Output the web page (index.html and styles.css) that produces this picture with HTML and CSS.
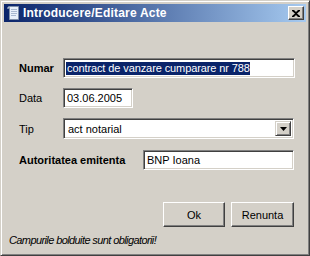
FILE: index.html
```html
<!DOCTYPE html>
<html lang="ro">
<head>
  <meta charset="UTF-8">
  <title>Introducere/Editare Acte</title>
  <link rel="stylesheet" href="styles.css">
</head>
<body>
  <div class="acte-window">
    <div class="acte-titlebar">
      <svg class="acte-title-icon" width="16" height="16" viewBox="0 0 16 16">
        <path d="M3.5 1.5h9v13h-9z" fill="#e8f0fa" stroke="#7f8fa8"/>
        <path d="M3.5 1.5c-1.5 0-2 1-2 2h2" fill="#c8d8ee" stroke="#7f8fa8"/>
        <path d="M5 4.5h6M5 6.5h6M5 8.5h6M5 10.5h5" stroke="#a8b8d0"/>
      </svg>
      <span class="acte-title-text">Introducere/Editare Acte</span>
      <span class="acte-close-btn">
        <svg width="8" height="7" viewBox="0 0 8 7">
          <path d="M0 0h2l2 2 2-2h2v1L5 3.5 8 6v1H6L4 5 2 7H0V6l3-2.5L0 1z" fill="#000"/>
        </svg>
      </span>
    </div>
    <div class="acte-body">
      <div class="acte-form">
        <div class="acte-row">
          <label class="acte-label acte-label-bold">Numar</label>
          <div class="acte-textbox acte-textbox-numar"><span class="acte-selected">contract de vanzare cumparare nr 788</span></div>
        </div>
        <div class="acte-row">
          <label class="acte-label">Data</label>
          <div class="acte-textbox acte-textbox-data">03.06.2005</div>
        </div>
        <div class="acte-row acte-row-tip">
          <label class="acte-label">Tip</label>
          <div class="acte-combo">
            <span class="acte-combo-text">act notarial</span>
            <span class="acte-combo-btn">
              <svg width="7" height="4" viewBox="0 0 7 4"><path d="M0 0h7L3.5 4z" fill="#000"/></svg>
            </span>
          </div>
        </div>
        <div class="acte-row acte-row-autoritate">
          <label class="acte-label acte-label-bold acte-label-wide">Autoritatea emitenta</label>
          <div class="acte-textbox acte-textbox-autoritate">BNP Ioana</div>
        </div>
      </div>
      <div class="acte-actions">
        <button class="acte-btn acte-btn-ok">Ok</button>
        <button class="acte-btn acte-btn-cancel">Renunta</button>
      </div>
      <div class="acte-note">Campurile bolduite sunt obligatorii!</div>
    </div>
  </div>
</body>
</html>
```

FILE: styles.css
```css
body {
  margin: 0;
  font-family: "Liberation Sans", Arial, sans-serif;
  font-size: 11px;
  color: #000;
  background: #d4d0c8;
}

.acte-window {
  width: 310px;
  height: 256px;
  box-sizing: border-box;
  border: 1px solid;
  border-color: #d4d0c8 #404040 #404040 #d4d0c8;
  box-shadow: inset 1px 1px #ffffff, inset -1px -1px #808080;
  padding: 3px;
  background-color: #d4d0c8;
  display: flex;
  flex-direction: column;
}

.acte-titlebar {
  height: 18px;
  display: flex;
  align-items: center;
  background: linear-gradient(to right, #0a246a, #a6caf0);
  padding: 0 2px 0 2px;
}

.acte-title-icon {
  flex: none;
  margin-right: 1px;
}

.acte-title-text {
  flex: 1;
  color: #ffffff;
  font-weight: bold;
  font-size: 12px;
  letter-spacing: 0.2px;
  white-space: nowrap;
}

.acte-close-btn {
  width: 16px;
  height: 14px;
  box-sizing: border-box;
  display: flex;
  align-items: center;
  justify-content: center;
  background-color: #d4d0c8;
  border: 1px solid;
  border-color: #ffffff #404040 #404040 #ffffff;
  box-shadow: inset -1px -1px #808080;
}

.acte-body {
  flex: 1;
  display: flex;
  flex-direction: column;
}

.acte-form {
  display: flex;
  flex-direction: column;
  gap: 10px;
  padding: 36px 0 0 15px;
}

.acte-row {
  display: flex;
  align-items: center;
  height: 20px;
}

.acte-row-tip {
  height: 21px;
}

.acte-row-autoritate {
  margin-top: 1px;
}

.acte-label {
  width: 44px;
  flex: none;
}

.acte-label-bold {
  font-weight: bold;
}

.acte-label-wide {
  width: 124px;
}

.acte-textbox {
  height: 20px;
  box-sizing: border-box;
  display: flex;
  align-items: center;
  padding-left: 3px;
  background-color: #ffffff;
  border: 1px solid;
  border-color: #808080 #ffffff #ffffff #808080;
  box-shadow: inset 1px 1px #404040, inset -1px -1px #d4d0c8;
  white-space: nowrap;
  overflow: hidden;
}

.acte-textbox-numar {
  width: 232px;
  padding-left: 2px;
}

.acte-textbox-data {
  width: 70px;
}

.acte-textbox-autoritate {
  width: 151px;
}

.acte-selected {
  background-color: #0a246a;
  color: #ffffff;
  line-height: 13px;
  padding-left: 1px;
  letter-spacing: -0.1px;
}

.acte-combo {
  width: 231px;
  height: 21px;
  box-sizing: border-box;
  display: flex;
  align-items: center;
  background-color: #ffffff;
  border: 1px solid;
  border-color: #808080 #ffffff #ffffff #808080;
  box-shadow: inset 1px 1px #404040, inset -1px -1px #d4d0c8;
  padding: 2px;
}

.acte-combo-text {
  flex: 1;
  padding-left: 2px;
}

.acte-combo-btn {
  width: 16px;
  height: 15px;
  box-sizing: border-box;
  display: flex;
  align-items: center;
  justify-content: center;
  background-color: #d4d0c8;
  border: 1px solid;
  border-color: #d4d0c8 #404040 #404040 #d4d0c8;
  box-shadow: inset 1px 1px #ffffff, inset -1px -1px #808080;
}

.acte-actions {
  display: flex;
  justify-content: flex-end;
  gap: 6px;
  margin-top: 32px;
  padding-right: 12px;
}

.acte-btn {
  height: 25px;
  box-sizing: border-box;
  font-family: "Liberation Sans", Arial, sans-serif;
  font-size: 11px;
  color: #000;
  background-color: #d4d0c8;
  border: 1px solid;
  border-color: #ffffff #404040 #404040 #ffffff;
  box-shadow: inset -1px -1px #808080;
  padding: 0;
}

.acte-btn-ok {
  width: 62px;
}

.acte-btn-cancel {
  width: 63px;
}

.acte-note {
  margin-top: 7px;
  padding-left: 5px;
  font-style: italic;
  letter-spacing: -0.6px;
  line-height: 13px;
}
```
